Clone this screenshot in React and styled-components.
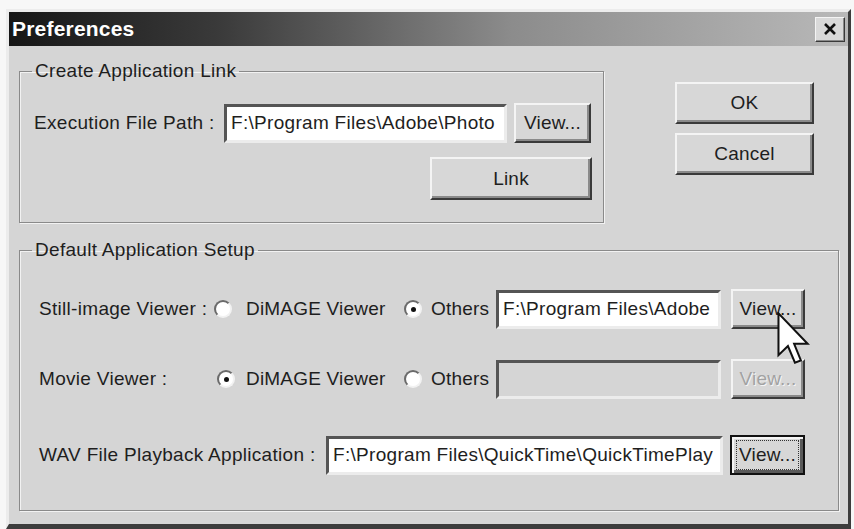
import React from "react";
import styled, { createGlobalStyle } from "styled-components";

const GlobalStyle = createGlobalStyle`
  body {
    margin: 0;
    background: #f7f7f7;
    font-family: "Liberation Sans", Arial, sans-serif;
  }
`;

export default function App() {
  return (
    <>
      <GlobalStyle />
      <Window>
        <TitleBar>
          <Title>Preferences</Title>
          <CloseButton aria-label="Close">
            <svg width="14" height="12" viewBox="0 0 14 12">
              <path d="M2 1 L12 11 M12 1 L2 11" stroke="#111" strokeWidth="2.6" />
            </svg>
          </CloseButton>
        </TitleBar>

        <Body>
          <TopSection>
            <Group $w={585} $pad="21px 11px 22px 14px">
              <Legend $ml={-2}>Create Application Link</Legend>
              <Row>
                <Label $w={190}>Execution File Path :</Label>
                <Field $w={283}>F:\Program Files\Adobe\Photo</Field>
                <Button $w={77} $ml={7}>View...</Button>
              </Row>
              <Row $end $mt={14}>
                <Button $w={162} $h={43}>Link</Button>
              </Row>
            </Group>

            <ButtonColumn>
              <Button $w={139} $h={42}>OK</Button>
              <Button $w={139} $h={42}>Cancel</Button>
            </ButtonColumn>
          </TopSection>

          <Group $w={820} $mt={16} $pad="28px 11px 35px 19px">
            <Legend $ml={-7}>Default Application Setup</Legend>
            <Row>
              <Label $w={175}>Still-image Viewer :</Label>
              <Radio $gap={14} />
              <Option $w={158}>DiMAGE Viewer</Option>
              <Radio $gap={9} $checked />
              <Option $w={65}>Others</Option>
              <Field $w={225}>F:\Program Files\Adobe</Field>
              <Button $w={74} $ml={10}>View...</Button>
            </Row>
            <Row $mt={30}>
              <Label $w={178}>Movie Viewer :</Label>
              <Radio $gap={11} $checked />
              <Option $w={158}>DiMAGE Viewer</Option>
              <Radio $gap={9} />
              <Option $w={65}>Others</Option>
              <Field $w={225} $disabled />
              <Button $w={74} $ml={10} $disabled>View...</Button>
            </Row>
            <Row $mt={36}>
              <Label $w={287}>WAV File Playback Application :</Label>
              <Field $w={397}>F:\Program Files\QuickTime\QuickTimePlay</Field>
              <Button $w={75} $ml={7} $default>
                <Focus>View...</Focus>
              </Button>
            </Row>
          </Group>
        </Body>

        <Cursor width="34" height="54" viewBox="0 0 12.5 20">
          <path
            d="M0.5 0.5 L0.5 16 L4 12.6 L6.6 18.8 L8.8 17.9 L6.3 11.8 L11.3 11.8 Z"
            fill="#fff"
            stroke="#111"
            strokeWidth="0.75"
            strokeLinejoin="miter"
          />
        </Cursor>
      </Window>
    </>
  );
}

const Window = styled.div`
  position: relative;
  box-sizing: border-box;
  margin: 9px 0 0 6px;
  width: 845px;
  height: 520px;
  background: #d5d5d5;
  border: 3px solid;
  border-bottom-width: 5px;
  border-color: #ececec #3c3c3c #3c3c3c #ececec;
  display: flex;
  flex-direction: column;
  color: #1e1e1e;
  font-size: 19px;
`;

const TitleBar = styled.div`
  height: 34px;
  display: flex;
  align-items: center;
  justify-content: space-between;
  padding: 0 3px 0 3px;
  background: linear-gradient(90deg, #161616 0%, #3a3a3a 25%, #8c8c8c 60%, #b8b8b8 100%);
`;

const Title = styled.span`
  color: #fff;
  font-weight: bold;
  font-size: 21px;
  letter-spacing: 0.2px;
`;

const CloseButton = styled.div`
  box-sizing: border-box;
  width: 30px;
  height: 25px;
  display: flex;
  align-items: center;
  justify-content: center;
  background: #d9d9d9;
  border: 1px solid;
  border-color: #f4f4f4 #3a3a3a #3a3a3a #f4f4f4;
  box-shadow: inset -1px -1px 0 #8a8a8a;
`;

const Body = styled.div`
  flex: 1;
  padding: 14px 9px 0 10px;
`;

const TopSection = styled.div`
  display: flex;
  align-items: flex-start;
`;

const ButtonColumn = styled.div`
  display: flex;
  flex-direction: column;
  gap: 9px;
  margin-left: 71px;
  padding-top: 22px;
`;

const Group = styled.fieldset`
  box-sizing: border-box;
  width: ${p => p.$w}px;
  min-width: 0;
  margin: ${p => p.$mt || 0}px 0 0 0;
  padding: ${p => p.$pad};
  border: 1px solid #8a8a8a;
  box-shadow: inset 1px 1px 0 #f2f2f2, 1px 1px 0 #f2f2f2;
`;

const Legend = styled.legend`
  margin-left: ${p => p.$ml}px;
  padding: 0 3px;
  font-size: 19px;
  line-height: 22px;
  letter-spacing: 0.3px;
`;

const Row = styled.div`
  display: flex;
  align-items: center;
  justify-content: ${p => (p.$end ? "flex-end" : "flex-start")};
  margin-top: ${p => p.$mt || 0}px;
  height: ${p => (p.$end ? 43 : 40)}px;
`;

const Label = styled.span`
  flex: none;
  width: ${p => p.$w}px;
  white-space: nowrap;
  letter-spacing: 0.3px;
`;

const Option = styled.span`
  flex: none;
  width: ${p => p.$w}px;
  white-space: nowrap;
  letter-spacing: 0.2px;
`;

const Radio = styled.span`
  flex: none;
  box-sizing: border-box;
  width: 18px;
  height: 18px;
  margin-right: ${p => p.$gap}px;
  border-radius: 50%;
  background: #fff;
  border: 2px solid;
  border-color: #6a6a6a #f2f2f2 #f2f2f2 #6a6a6a;
  display: flex;
  align-items: center;
  justify-content: center;
  &::after {
    content: "";
    width: 5px;
    height: 5px;
    border-radius: 50%;
    background: ${p => (p.$checked ? "#111" : "transparent")};
  }
`;

const Field = styled.div`
  flex: none;
  box-sizing: border-box;
  width: ${p => p.$w}px;
  height: 39px;
  padding: 0 4px;
  display: flex;
  align-items: center;
  overflow: hidden;
  white-space: nowrap;
  background: ${p => (p.$disabled ? "#d5d5d5" : "#fff")};
  border: 3px solid;
  border-color: #555 #ececec #ececec #555;
  letter-spacing: 0.3px;
`;

const Button = styled.div`
  flex: none;
  box-sizing: border-box;
  width: ${p => p.$w}px;
  height: ${p => p.$h || 40}px;
  margin-left: ${p => p.$ml || 0}px;
  display: flex;
  align-items: center;
  justify-content: center;
  background: #d7d7d7;
  border: 2px solid;
  border-color: ${p => (p.$default ? "#111" : "#f4f4f4 #3a3a3a #3a3a3a #f4f4f4")};
  box-shadow: ${p =>
    p.$default
      ? "inset 2px 2px 0 #f4f4f4, inset -3px -3px 0 #5a5a5a"
      : "inset -2px -2px 0 #8a8a8a"};
  color: ${p => (p.$disabled ? "#a2a2a2" : "#1e1e1e")};
  text-shadow: ${p => (p.$disabled ? "1px 1px 0 #f4f4f4" : "none")};
  letter-spacing: 0.2px;
`;

const Focus = styled.span`
  padding: 3px 2px;
  border: 1px dotted #333;
`;

const Cursor = styled.svg`
  position: absolute;
  left: 768px;
  top: 300px;
`;
